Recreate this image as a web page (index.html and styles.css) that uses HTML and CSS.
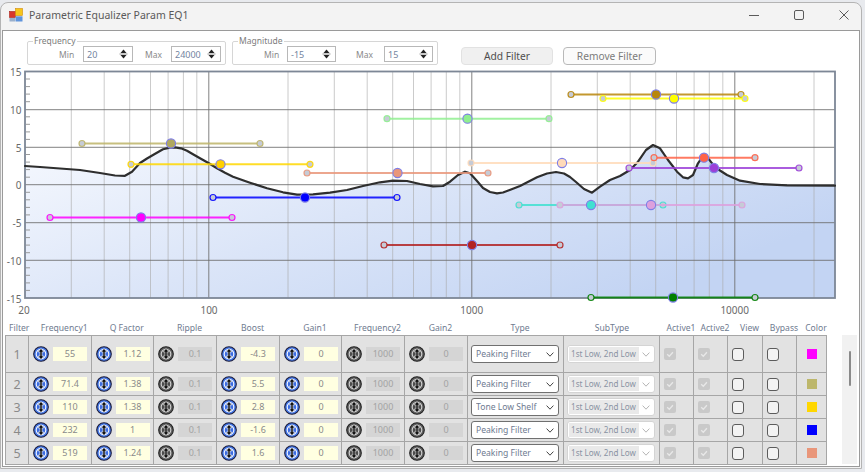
FILE: index.html
```html
<!DOCTYPE html>
<html lang="en">
<head>
<meta charset="utf-8">
<title>Parametric Equalizer Param EQ1</title>
<link rel="stylesheet" href="styles.css">
</head>
<body>
<svg class="defs" width="0" height="0" aria-hidden="true">
  <defs>
    <symbol id="kb" viewBox="0 0 16 16">
      <circle cx="8" cy="8" r="7.3" fill="#4479ea" stroke="#1c1c3a" stroke-width="1.1"/>
      <circle cx="8" cy="8" r="4.8" fill="#3c6ce0" stroke="#f4f6ff" stroke-width="1.1"/>
      <path d="M8 2.5 L10.9 5.9 H9.1 V10.1 H10.9 L8 13.5 L5.1 10.1 H6.9 V5.9 H5.1 Z" fill="#111" stroke="#fff" stroke-width="0.6" stroke-linejoin="round"/>
    </symbol>
    <symbol id="kg" viewBox="0 0 16 16">
      <circle cx="8" cy="8" r="7.3" fill="#5e5e5e" stroke="#222" stroke-width="1.1"/>
      <circle cx="8" cy="8" r="4.8" fill="#4c4c4c" stroke="#d2d2d2" stroke-width="1.1"/>
      <path d="M8 2.5 L10.9 5.9 H9.1 V10.1 H10.9 L8 13.5 L5.1 10.1 H6.9 V5.9 H5.1 Z" fill="#111" stroke="#eee" stroke-width="0.6" stroke-linejoin="round"/>
    </symbol>
    <symbol id="spin" viewBox="0 0 9 12">
      <path d="M1.5 5 L4.5 1.5 L7.5 5 Z" fill="#222"/>
      <path d="M0.5 6 H8.5" stroke="#777" stroke-width="0.8"/>
      <path d="M1.5 7 L4.5 10.5 L7.5 7 Z" fill="#222"/>
    </symbol>
    <symbol id="chev" viewBox="0 0 8 5">
      <path d="M0.6 0.6 L4 4.2 L7.4 0.6" fill="none" stroke="currentColor" stroke-width="1"/>
    </symbol>
    <symbol id="tick" viewBox="0 0 12 12">
      <path d="M3.2 6.3 L5.3 8.3 L8.9 4.2" fill="none" stroke="#e8e8e8" stroke-width="1.3"/>
    </symbol>
  </defs>
</svg>

<div class="window">
  <header class="titlebar">
    <svg class="app-icon" viewBox="0 0 14 14">
      <rect x="0.5" y="3.5" width="6" height="6" fill="#d8372c" stroke="#a82018" stroke-width="0.6"/>
      <rect x="6.5" y="0.5" width="7" height="7" fill="#f6c51a" stroke="#d28a08" stroke-width="0.6"/>
      <rect x="0.5" y="10" width="5.5" height="3.5" fill="#9ab0cc"/>
      <rect x="6.5" y="8.3" width="7" height="5.2" fill="#5f94dc"/>
    </svg>
    <span class="title">Parametric Equalizer Param EQ1</span>
    <div class="caption">
      <svg viewBox="0 0 10 10"><path d="M0 5.5 H10" stroke="#5a5a5a" stroke-width="1"/></svg>
      <svg viewBox="0 0 10 10"><rect x="0.5" y="0.5" width="9" height="9" rx="1.5" fill="none" stroke="#5a5a5a" stroke-width="1"/></svg>
      <svg viewBox="0 0 10 10"><path d="M0.5 0.5 L9.5 9.5 M9.5 0.5 L0.5 9.5" stroke="#5a5a5a" stroke-width="1"/></svg>
    </div>
  </header>

  <main class="client">
    <div class="toolbar">
      <fieldset class="grp grp-freq">
        <legend>Frequency</legend>
        <span class="lbl f-min">Min</span>
        <span class="spin f-spin1"><span class="val">20</span><svg><use href="#spin"/></svg></span>
        <span class="lbl f-max">Max</span>
        <span class="spin f-spin2"><span class="val">24000</span><svg><use href="#spin"/></svg></span>
      </fieldset>
      <fieldset class="grp grp-mag">
        <legend>Magnitude</legend>
        <span class="lbl m-min">Min</span>
        <span class="spin m-spin1"><span class="val">-15</span><svg><use href="#spin"/></svg></span>
        <span class="lbl m-max">Max</span>
        <span class="spin m-spin2"><span class="val">15</span><svg><use href="#spin"/></svg></span>
      </fieldset>
      <button class="btn btn-add">Add Filter</button>
      <button class="btn btn-remove">Remove Filter</button>
    </div>

    <svg class="chart" viewBox="3 66 856 254" width="856" height="254">
      <defs>
        <linearGradient id="fillg" x1="0" y1="0" x2="1" y2="0.5">
          <stop offset="0" stop-color="#f5f8fe"/>
          <stop offset="0.5" stop-color="#dbe5f8"/>
          <stop offset="1" stop-color="#c3d4f3"/>
        </linearGradient>
      </defs>
      <rect x="25" y="71.5" width="810" height="226.5" fill="#fff"/>
      <path fill="url(#fillg)" d="M25,166 L40,167 L60,168.5 L80,170 L100,173 L115,175.5 L125,175.8 L132,171.7 L140,163 L147,158.5 L153,155 L163,149.3 L170,147.6 L175,147.3 L181,148.3 L187,150.7 L193,154.3 L200,158.3 L208,162.7 L217,168.3 L225,172.8 L233,176.7 L250,182.7 L267,188.3 L283,192.3 L297,194.7 L313,194.3 L330,192.7 L347,190 L363,186 L380,182.3 L393,180.7 L407,181 L420,184 L433,186.3 L443,186 L450,181.7 L458,175 L465,171.7 L470,173.3 L477,181 L483,188 L490,192 L497,193.3 L503,192.5 L511,189.5 L520,186 L537,177.3 L547,173.5 L556,172 L564,173.5 L570,177 L576,182 L584,189 L592,192.7 L600,186.7 L610,180 L620,176 L630,170 L638,161.7 L646,150 L653,145 L660,148.3 L668,160 L677,171.7 L683,177.3 L688,178.3 L693,175 L698,163.3 L703,156 L707,156.7 L712,163.3 L718,169.3 L727,175 L740,180.7 L760,184 L787,185.3 L835,185.7 L835,298 L25,298 Z"/>
      <path class="grid-minor" d="M71.3 72V298 M104.2 72V298 M129.7 72V298 M150.5 72V298 M168.1 72V298 M183.4 72V298 M196.8 72V298 M288 72V298 M334.3 72V298 M367.2 72V298 M392.7 72V298 M413.5 72V298 M431.1 72V298 M446.3 72V298 M459.8 72V298 M551 72V298 M597.3 72V298 M630.2 72V298 M655.7 72V298 M676.5 72V298 M694.1 72V298 M709.3 72V298 M722.8 72V298 M814 72V298"/>
      <path class="grid-major" d="M208.8 72V298 M471.8 72V298 M734.8 72V298 M25 109.7H835 M25 147.3H835 M25 184.7H835 M25 222.7H835 M25 260.3H835"/>
      <path class="ticks" d="M26 79h4 M26 86.6h4 M26 94.1h4 M26 101.7h4 M26 116.8h4 M26 124.3h4 M26 131.9h4 M26 139.4h4 M26 154.5h4 M26 162.1h4 M26 169.6h4 M26 177.2h4 M26 192.3h4 M26 199.8h4 M26 207.4h4 M26 214.9h4 M26 230h4 M26 237.6h4 M26 245.1h4 M26 252.7h4 M26 267.8h4 M26 275.3h4 M26 282.9h4 M26 290.4h4"/>
      <rect class="frame" x="25" y="71.5" width="810" height="226.5"/>
      <polyline class="curve" points="25,166 40,167 60,168.5 80,170 100,173 115,175.5 125,175.8 132,171.7 140,163 147,158.5 153,155 163,149.3 170,147.6 175,147.3 181,148.3 187,150.7 193,154.3 200,158.3 208,162.7 217,168.3 225,172.8 233,176.7 250,182.7 267,188.3 283,192.3 297,194.7 313,194.3 330,192.7 347,190 363,186 380,182.3 393,180.7 407,181 420,184 433,186.3 443,186 450,181.7 458,175 465,171.7 470,173.3 477,181 483,188 490,192 497,193.3 503,192.5 511,189.5 520,186 537,177.3 547,173.5 556,172 564,173.5 570,177 576,182 584,189 592,192.7 600,186.7 610,180 620,176 630,170 638,161.7 646,150 653,145 660,148.3 668,160 677,171.7 683,177.3 688,178.3 693,175 698,163.3 703,156 707,156.7 712,163.3 718,169.3 727,175 740,180.7 760,184 787,185.3 835,185.7"/>

      <g class="bands">
        <g stroke="#ff00ff"><line x1="50" y1="217.5" x2="232" y2="217.5"/><circle class="end" cx="50" cy="217.5" r="3"/><circle class="end" cx="232" cy="217.5" r="3"/></g>
        <g stroke="#bdb468"><line x1="82" y1="143.5" x2="260" y2="143.5"/><circle class="end" cx="82" cy="143.5" r="3"/><circle class="end" cx="260" cy="143.5" r="3"/></g>
        <g stroke="#ffd700"><line x1="131" y1="164.3" x2="310" y2="164.3"/><circle class="end" cx="131" cy="164.3" r="3"/><circle class="end" cx="310" cy="164.3" r="3"/></g>
        <g stroke="#0000ff"><line x1="213" y1="197.5" x2="397" y2="197.5"/><circle class="end" cx="213" cy="197.5" r="3"/><circle class="end" cx="397" cy="197.5" r="3"/></g>
        <g stroke="#e9967a"><line x1="307" y1="173" x2="488" y2="173"/><circle class="end" cx="307" cy="173" r="3"/><circle class="end" cx="488" cy="173" r="3"/></g>
        <g stroke="#90ee90"><line x1="387" y1="118.7" x2="549" y2="118.7"/><circle class="end" cx="387" cy="118.7" r="3"/><circle class="end" cx="549" cy="118.7" r="3"/></g>
        <g stroke="#b22222"><line x1="384" y1="245" x2="560" y2="245"/><circle class="end" cx="384" cy="245" r="3"/><circle class="end" cx="560" cy="245" r="3"/></g>
        <g stroke="#ffdab9"><line x1="471" y1="163" x2="653" y2="163"/><circle class="end" cx="471" cy="163" r="3"/><circle class="end" cx="653" cy="163" r="3"/></g>
        <g stroke="#40e0d0"><line x1="519" y1="205" x2="663" y2="205"/><circle class="end" cx="519" cy="205" r="3"/><circle class="end" cx="663" cy="205" r="3"/></g>
        <g stroke="#dda0dd"><line x1="560" y1="205" x2="742" y2="205"/><circle class="end" cx="560" cy="205" r="3"/><circle class="end" cx="742" cy="205" r="3"/></g>
        <g stroke="#b8860b"><line x1="571" y1="94.5" x2="741" y2="94.5"/><circle class="end" cx="571" cy="94.5" r="3"/><circle class="end" cx="741" cy="94.5" r="3"/></g>
        <g stroke="#ffff00"><line x1="603" y1="98.5" x2="745" y2="98.5"/><circle class="end" cx="603" cy="98.5" r="3"/><circle class="end" cx="745" cy="98.5" r="3"/></g>
        <g stroke="#ff6347"><line x1="654" y1="157.7" x2="755" y2="157.7"/><circle class="end" cx="654" cy="157.7" r="3"/><circle class="end" cx="755" cy="157.7" r="3"/></g>
        <g stroke="#9b3fd8"><line x1="629" y1="168" x2="799" y2="168"/><circle class="end" cx="629" cy="168" r="3"/><circle class="end" cx="799" cy="168" r="3"/></g>
        <g stroke="#008000"><line x1="591" y1="297.5" x2="755" y2="297.5"/><circle class="end" cx="591" cy="297.5" r="3"/><circle class="end" cx="755" cy="297.5" r="3"/></g>
      </g>
      <g class="centers">
        <circle cx="141" cy="217.5" r="4.6" fill="#ff00ff" stroke="#e000e0"/>
        <circle cx="171" cy="143.5" r="4.6" fill="#b0a860"/>
        <circle cx="220.5" cy="164.3" r="4.6" fill="#ffd000"/>
        <circle cx="305" cy="197.5" r="4.6" fill="#0000ff" stroke="#0000e0"/>
        <circle cx="397.5" cy="173" r="4.6" fill="#e9967a"/>
        <circle cx="467.5" cy="118.7" r="4.6" fill="#90ee90"/>
        <circle cx="472" cy="245" r="4.6" fill="#b22222"/>
        <circle cx="562" cy="163" r="4.6" fill="#ffdab9"/>
        <circle cx="591" cy="205" r="4.6" fill="#40e0d0"/>
        <circle cx="651" cy="205" r="4.6" fill="#dda0dd"/>
        <circle cx="656" cy="94.5" r="4.6" fill="#b8860b"/>
        <circle cx="674" cy="98.5" r="4.6" fill="#ffff00"/>
        <circle cx="704" cy="157.7" r="4.6" fill="#ff6347"/>
        <circle cx="714" cy="168" r="4.6" fill="#9b3fd8"/>
        <circle cx="673" cy="297.5" r="4.6" fill="#008000"/>
      </g>

      <g class="axis-y">
        <text x="21.5" y="76">15</text>
        <text x="21.5" y="114">10</text>
        <text x="21.5" y="151.5">5</text>
        <text x="21.5" y="189">0</text>
        <text x="21.5" y="226.7">-5</text>
        <text x="21.5" y="264.5">-10</text>
        <text x="21.5" y="303">-15</text>
      </g>
      <g class="axis-x">
        <text x="24" y="313.5">20</text>
        <text x="209" y="313.5">100</text>
        <text x="471.7" y="313.5">1000</text>
        <text x="734.7" y="313.5">10000</text>
      </g>
    </svg>

    <section class="table-area">
      <div class="tbl">
        <div class="thead">
          <span class="h-filter">Filter</span>
          <span>Frequency1</span>
          <span>Q Factor</span>
          <span>Ripple</span>
          <span>Boost</span>
          <span>Gain1</span>
          <span>Frequency2</span>
          <span>Gain2</span>
          <span>Type</span>
          <span class="h-sub">SubType</span>
          <span>Active1</span>
          <span>Active2</span>
          <span>View</span>
          <span>Bypass</span>
          <span>Color</span>
        </div>
        <div class="grid">
          <!-- row 1 -->
          <div class="cell idx">1</div>
          <div class="cell num"><svg class="knob"><use href="#kb"/></svg><span class="inp">55</span></div>
          <div class="cell num"><svg class="knob"><use href="#kb"/></svg><span class="inp">1.12</span></div>
          <div class="cell num off"><svg class="knob"><use href="#kg"/></svg><span class="inp">0.1</span></div>
          <div class="cell num"><svg class="knob"><use href="#kb"/></svg><span class="inp">-4.3</span></div>
          <div class="cell num"><svg class="knob"><use href="#kb"/></svg><span class="inp">0</span></div>
          <div class="cell num off"><svg class="knob"><use href="#kg"/></svg><span class="inp">1000</span></div>
          <div class="cell num off"><svg class="knob"><use href="#kg"/></svg><span class="inp">0</span></div>
          <div class="cell"><div class="combo"><span class="ctext">Peaking Filter</span><svg class="chev"><use href="#chev"/></svg></div></div>
          <div class="cell"><div class="combo sub"><span class="ctext">1st Low, 2nd Low</span><svg class="chev"><use href="#chev"/></svg></div></div>
          <div class="cell chk"><span class="cb dis"><svg><use href="#tick"/></svg></span></div>
          <div class="cell chk"><span class="cb dis"><svg><use href="#tick"/></svg></span></div>
          <div class="cell chk"><span class="cb"></span></div>
          <div class="cell chk"><span class="cb"></span></div>
          <div class="cell clr"><span class="sw sw-magenta"></span></div>
          <!-- row 2 -->
          <div class="cell idx">2</div>
          <div class="cell num"><svg class="knob"><use href="#kb"/></svg><span class="inp">71.4</span></div>
          <div class="cell num"><svg class="knob"><use href="#kb"/></svg><span class="inp">1.38</span></div>
          <div class="cell num off"><svg class="knob"><use href="#kg"/></svg><span class="inp">0.1</span></div>
          <div class="cell num"><svg class="knob"><use href="#kb"/></svg><span class="inp">5.5</span></div>
          <div class="cell num"><svg class="knob"><use href="#kb"/></svg><span class="inp">0</span></div>
          <div class="cell num off"><svg class="knob"><use href="#kg"/></svg><span class="inp">1000</span></div>
          <div class="cell num off"><svg class="knob"><use href="#kg"/></svg><span class="inp">0</span></div>
          <div class="cell"><div class="combo"><span class="ctext">Peaking Filter</span><svg class="chev"><use href="#chev"/></svg></div></div>
          <div class="cell"><div class="combo sub"><span class="ctext">1st Low, 2nd Low</span><svg class="chev"><use href="#chev"/></svg></div></div>
          <div class="cell chk"><span class="cb dis"><svg><use href="#tick"/></svg></span></div>
          <div class="cell chk"><span class="cb dis"><svg><use href="#tick"/></svg></span></div>
          <div class="cell chk"><span class="cb"></span></div>
          <div class="cell chk"><span class="cb"></span></div>
          <div class="cell clr"><span class="sw sw-khaki"></span></div>
          <!-- row 3 -->
          <div class="cell idx">3</div>
          <div class="cell num"><svg class="knob"><use href="#kb"/></svg><span class="inp">110</span></div>
          <div class="cell num"><svg class="knob"><use href="#kb"/></svg><span class="inp">1.38</span></div>
          <div class="cell num off"><svg class="knob"><use href="#kg"/></svg><span class="inp">0.1</span></div>
          <div class="cell num"><svg class="knob"><use href="#kb"/></svg><span class="inp">2.8</span></div>
          <div class="cell num"><svg class="knob"><use href="#kb"/></svg><span class="inp">0</span></div>
          <div class="cell num off"><svg class="knob"><use href="#kg"/></svg><span class="inp">1000</span></div>
          <div class="cell num off"><svg class="knob"><use href="#kg"/></svg><span class="inp">0</span></div>
          <div class="cell"><div class="combo"><span class="ctext">Tone Low Shelf</span><svg class="chev"><use href="#chev"/></svg></div></div>
          <div class="cell"><div class="combo sub"><span class="ctext">1st Low, 2nd Low</span><svg class="chev"><use href="#chev"/></svg></div></div>
          <div class="cell chk"><span class="cb dis"><svg><use href="#tick"/></svg></span></div>
          <div class="cell chk"><span class="cb dis"><svg><use href="#tick"/></svg></span></div>
          <div class="cell chk"><span class="cb"></span></div>
          <div class="cell chk"><span class="cb"></span></div>
          <div class="cell clr"><span class="sw sw-gold"></span></div>
          <!-- row 4 -->
          <div class="cell idx">4</div>
          <div class="cell num"><svg class="knob"><use href="#kb"/></svg><span class="inp">232</span></div>
          <div class="cell num"><svg class="knob"><use href="#kb"/></svg><span class="inp">1</span></div>
          <div class="cell num off"><svg class="knob"><use href="#kg"/></svg><span class="inp">0.1</span></div>
          <div class="cell num"><svg class="knob"><use href="#kb"/></svg><span class="inp">-1.6</span></div>
          <div class="cell num"><svg class="knob"><use href="#kb"/></svg><span class="inp">0</span></div>
          <div class="cell num off"><svg class="knob"><use href="#kg"/></svg><span class="inp">1000</span></div>
          <div class="cell num off"><svg class="knob"><use href="#kg"/></svg><span class="inp">0</span></div>
          <div class="cell"><div class="combo"><span class="ctext">Peaking Filter</span><svg class="chev"><use href="#chev"/></svg></div></div>
          <div class="cell"><div class="combo sub"><span class="ctext">1st Low, 2nd Low</span><svg class="chev"><use href="#chev"/></svg></div></div>
          <div class="cell chk"><span class="cb dis"><svg><use href="#tick"/></svg></span></div>
          <div class="cell chk"><span class="cb dis"><svg><use href="#tick"/></svg></span></div>
          <div class="cell chk"><span class="cb"></span></div>
          <div class="cell chk"><span class="cb"></span></div>
          <div class="cell clr"><span class="sw sw-blue"></span></div>
          <!-- row 5 -->
          <div class="cell idx">5</div>
          <div class="cell num"><svg class="knob"><use href="#kb"/></svg><span class="inp">519</span></div>
          <div class="cell num"><svg class="knob"><use href="#kb"/></svg><span class="inp">1.24</span></div>
          <div class="cell num off"><svg class="knob"><use href="#kg"/></svg><span class="inp">0.1</span></div>
          <div class="cell num"><svg class="knob"><use href="#kb"/></svg><span class="inp">1.6</span></div>
          <div class="cell num"><svg class="knob"><use href="#kb"/></svg><span class="inp">0</span></div>
          <div class="cell num off"><svg class="knob"><use href="#kg"/></svg><span class="inp">1000</span></div>
          <div class="cell num off"><svg class="knob"><use href="#kg"/></svg><span class="inp">0</span></div>
          <div class="cell"><div class="combo"><span class="ctext">Peaking Filter</span><svg class="chev"><use href="#chev"/></svg></div></div>
          <div class="cell"><div class="combo sub"><span class="ctext">1st Low, 2nd Low</span><svg class="chev"><use href="#chev"/></svg></div></div>
          <div class="cell chk"><span class="cb dis"><svg><use href="#tick"/></svg></span></div>
          <div class="cell chk"><span class="cb dis"><svg><use href="#tick"/></svg></span></div>
          <div class="cell chk"><span class="cb"></span></div>
          <div class="cell chk"><span class="cb"></span></div>
          <div class="cell clr"><span class="sw sw-salmon"></span></div>
        </div>
      </div>
      <div class="vscroll"><div class="thumb"></div></div>
    </section>
  </main>
</div>
</body>
</html>
```

FILE: styles.css
```css
* { box-sizing: border-box; }
html, body { margin: 0; padding: 0; }
body {
  width: 865px;
  height: 472px;
  overflow: hidden;
  background: #e8eaee;
  font-family: "Noto Sans", "Open Sans", sans-serif;
  color: #555;
}
.defs { position: absolute; width: 0; height: 0; overflow: hidden; }

.window {
  margin-top: 2px;
  width: 862px;
  height: 467px;
  border: 1px solid #b4b4b4;
  border-radius: 8px 8px 0 0;
  background: #f3f3f3;
  display: flex;
  flex-direction: column;
  overflow: hidden;
}

/* title bar */
.titlebar {
  height: 27px;
  flex: none;
  display: flex;
  align-items: center;
  padding: 0 0 4px 8px;
}
.app-icon { width: 14px; height: 14px; flex: none; display: block; }
.title { margin-left: 6px; font-size: 10.5px; color: #5a5a5a; white-space: nowrap; }
.caption {
  margin-left: auto;
  display: flex;
  align-items: center;
  gap: 35px;
  padding-right: 12px;
}
.caption svg { width: 10px; height: 10px; display: block; }

/* client */
.client {
  flex: 1;
  margin: 0 1px 1px;
  border: 1px solid #9a9a9a;
  background: #fff;
  display: flex;
  flex-direction: column;
  min-height: 0;
}

/* toolbar */
.toolbar {
  height: 35px;
  flex: none;
  display: flex;
  align-items: flex-start;
  padding: 5px 0 0 24px;
}
.grp {
  margin: 0;
  padding: 0 4px 2px 6px;
  border: 1px solid #d6d6d6;
  border-radius: 2px;
  display: flex;
  align-items: center;
  min-width: 0;
}
.grp legend {
  font-size: 8.5px;
  line-height: 10px;
  color: #7c7c7c;
  padding: 0 1px;
  margin-left: -1px;
}
.grp-freq { width: 199px; }
.grp-mag { width: 206px; margin-left: 6px; }
.lbl { font-size: 8.5px; color: #8a8a8a; white-space: nowrap; flex: none; }
.spin {
  display: flex;
  align-items: center;
  flex: none;
  height: 16px;
  border: 1px solid #b8b8b8;
  background: #fff;
  font-size: 9px;
  color: #7384a0;
}
.spin .val { flex: 1; padding-left: 3px; }
.spin svg { width: 9px; height: 12px; margin-right: 4px; flex: none; }

.f-min { margin-left: 25px; width: 14px; }
.f-spin1 { margin-left: 10px; width: 50px; }
.f-max { margin-left: 12px; width: 17px; }
.f-spin2 { margin-left: 9px; width: 50px; }
.m-min { margin-left: 25px; width: 14px; }
.m-spin1 { margin-left: 9px; width: 49px; }
.m-max { margin-left: 20px; width: 17px; }
.m-spin2 { margin-left: 11px; width: 49px; }

.btn {
  font-family: inherit;
  font-weight: normal;
  height: 18px;
  margin-top: 11px;
  border-radius: 4px;
  font-size: 10.2px;
  padding: 0;
  width: 92px;
  line-height: 16px;
}
.btn-add {
  margin-left: 23px;
  background: #f0f0f0;
  border: 1px solid #e2e2e2;
  color: #4e4e4e;
}
.btn-remove {
  margin-left: 10px;
  width: 93px;
  background: #fbfbfb;
  border: 1px solid #b9b9b9;
  color: #7b7b7b;
}

/* chart */
.chart { display: block; flex: none; width: 856px; height: 254px; }
.grid-minor { stroke: #a8a8a8; stroke-opacity: 0.6; stroke-width: 1; fill: none; }
.grid-major { stroke: #6c6c6c; stroke-opacity: 0.85; stroke-width: 1; fill: none; }
.ticks { stroke: #9a9a9a; stroke-width: 1; fill: none; }
.frame { fill: none; stroke: #7d8796; stroke-width: 1.8; }
.curve { fill: none; stroke: #2e2e2e; stroke-width: 2.2; stroke-linejoin: round; stroke-linecap: round; }
.bands line { stroke-width: 2; stroke-opacity: 0.85; }
.bands .end { fill: #c6cbd6; stroke-width: 1.2; stroke-opacity: 0.9; }
.centers circle { stroke: #7e7ee6; stroke-width: 1.1; }
.axis-y text, .axis-x text {
  font-family: "Noto Sans", "Open Sans", sans-serif;
  font-size: 10px;
  fill: #6a6a6a;
}
.axis-y text { text-anchor: end; }
.axis-x text { text-anchor: middle; }

/* table */
.table-area { flex: none; display: flex; padding-left: 2px; }
.tbl { width: 822px; flex: none; }
.thead {
  display: grid;
  grid-template-columns: 24px 62.5px 62.5px 63px 63px 62px 63px 63px 96px 96px 34px 34px 35px 34px 30px;
  height: 15px;
  font-size: 8.6px;
  color: #6f7b90;
}
.thead span {
  display: flex;
  align-items: flex-end;
  justify-content: center;
  padding-left: 8px;
  padding-bottom: 1px;
  white-space: nowrap;
  line-height: 11px;
}
.thead .h-filter { justify-content: flex-start; padding-left: 4px; }
.thead .h-sub { padding-left: 0; }

.grid {
  display: grid;
  grid-template-columns: 23px 62.5px 62.5px 63px 63px 62px 63px 63px 96px 96px 34px 34px 35px 34px 30px;
  grid-template-rows: 37px 23px 23px 23px 23px;
  border-top: 1px solid #a6a6a6;
  border-left: 1px solid #a6a6a6;
}
.cell {
  background: #e2e2e2;
  border-right: 1px solid #a6a6a6;
  border-bottom: 1px solid #a6a6a6;
  display: flex;
  align-items: center;
  min-width: 0;
  overflow: hidden;
}
.idx { justify-content: center; font-size: 12.5px; color: #8a8a8a; }
.num { padding-left: 4px; }
.knob { width: 16px; height: 16px; flex: none; display: block; }
.inp {
  margin-left: 4px;
  width: 34px;
  height: 14px;
  flex: none;
  background: #ffffe1;
  font-size: 9px;
  color: #8a8a8a;
  text-align: center;
  line-height: 14px;
}
.off .inp { background: #d5d5d5; color: #a3a3a3; }

.combo {
  margin-left: 3px;
  width: 88px;
  height: 18px;
  flex: none;
  border: 1px solid #707070;
  border-radius: 3px;
  background: #fff;
  display: flex;
  align-items: center;
  padding: 0 4px;
  font-size: 8.6px;
  color: #6e7a90;
}
.ctext { flex: 1; white-space: nowrap; overflow: hidden; }
.chev { width: 8px; height: 5px; flex: none; color: #444; display: block; }
.combo.sub { border-color: #d4d4d4; padding-left: 1px; }
.combo.sub .ctext {
  flex: none;
  width: 70px;
  height: 14px;
  line-height: 14px;
  background: #e9e9e9;
  padding-left: 2px;
  font-size: 8.1px;
  color: #8a93a3;
}
.combo.sub .chev { margin-left: auto; color: #b5b5b5; }

.chk { padding-left: 4px; }
.cb {
  width: 12px;
  height: 13px;
  flex: none;
  border: 1.3px solid #5c5c5c;
  border-radius: 3px;
  background: #f3f3f3;
}
.cb.dis { border: none; height: 12px; background: #c9c9c9; border-radius: 2px; }
.cb svg { width: 12px; height: 12px; display: block; }
.clr { justify-content: center; }
.sw { width: 10px; height: 10px; }
.sw-magenta { background: #ff00ff; }
.sw-khaki { background: #bdb76b; }
.sw-gold { background: #ffd700; }
.sw-blue { background: #0000ff; }
.sw-salmon { background: #e9967a; }

.vscroll {
  margin-left: 15px;
  margin-top: 15px;
  width: 15px;
  height: 129px;
  flex: none;
  background: #f1f1f1;
  display: flex;
  justify-content: center;
  padding-top: 16px;
}
.thumb { width: 2px; height: 35px; background: #8a8a8a; border-radius: 1px; }
```
